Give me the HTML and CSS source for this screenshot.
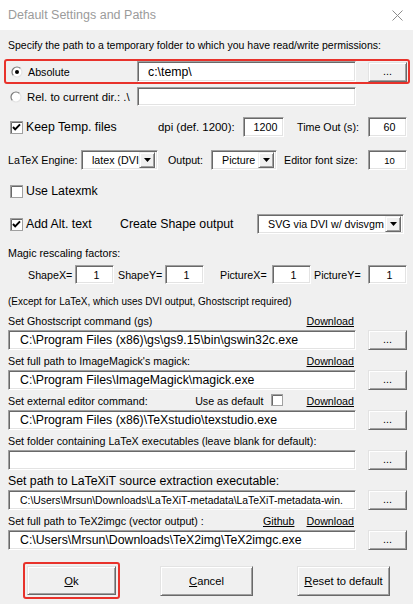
FILE: index.html
```html
<!DOCTYPE html>
<html lang="en">
<head>
<meta charset="utf-8">
<title>Default Settings and Paths</title>
<link rel="stylesheet" href="styles.css">
</head>
<body>
<div class="titlebar">
  <span class="title">Default Settings and Paths</span>
  <svg class="close" width="11" height="11" viewBox="0 0 11 11"><path d="M0.5 0.5 L10.5 10.5 M10.5 0.5 L0.5 10.5" stroke="#8c8c8c" stroke-width="1"/></svg>
</div>
<main class="panel">
  <p class="row r-spec">Specify the path to a temporary folder to which you have read/write permissions:</p>

  <div class="row r-abs highlight">
    <span class="opt w-abs">
      <svg class="radio" width="12" height="12" viewBox="0 0 12 12"><circle cx="6" cy="6" r="5" fill="#fff"/><path d="M9.54 2.46 A5 5 0 0 0 2.46 9.54" fill="none" stroke="#7a7a7a" stroke-width="1.2"/><path d="M9.54 2.46 A5 5 0 0 1 2.46 9.54" fill="none" stroke="#e3e3e3" stroke-width="1.2"/><circle cx="6" cy="6" r="2" fill="#000"/></svg>
      <span class="sm">Absolute</span>
    </span>
    <span class="field f-temp lg">c:\temp\</span>
    <span class="btn dots">...</span>
  </div>

  <div class="row r-rel">
    <span class="opt w-rel">
      <svg class="radio" width="12" height="12" viewBox="0 0 12 12"><circle cx="6" cy="6" r="5" fill="#fff"/><path d="M9.54 2.46 A5 5 0 0 0 2.46 9.54" fill="none" stroke="#7a7a7a" stroke-width="1.2"/><path d="M9.54 2.46 A5 5 0 0 1 2.46 9.54" fill="none" stroke="#e3e3e3" stroke-width="1.2"/></svg>
      <span class="md">Rel. to current dir.: .\</span>
    </span>
    <span class="field f-rel"></span>
  </div>

  <div class="row r-keep">
    <span class="opt w-keep">
      <svg class="check" width="13" height="13" viewBox="0 0 13 13"><rect x="0.5" y="0.5" width="12" height="12" fill="#fff" stroke="#a0a0a0"/><path d="M1.5 12 V1.5 H12" fill="none" stroke="#696969"/><polyline points="3,6 5.2,8.4 10,3.4" fill="none" stroke="#000" stroke-width="2"/></svg>
      <span class="lg">Keep Temp. files</span>
    </span>
    <span class="lbl w-dpi md">dpi (def. 1200):</span>
    <span class="field num w-1200 sm">1200</span>
    <span class="lbl w-time sm">Time Out (s):</span>
    <span class="field num w-end sm">60</span>
  </div>

  <div class="row r-engine">
    <span class="lbl w-engine sm">LaTeX Engine:</span>
    <span class="combo w-c1 sm"><span class="ctext">latex (DVI</span><span class="drop"><svg width="7" height="4" viewBox="0 0 7 4"><polygon points="0,0 7,0 3.5,4" fill="#000"/></svg></span></span>
    <span class="lbl w-output sm">Output:</span>
    <span class="combo w-c2 sm"><span class="ctext">Picture</span><span class="drop"><svg width="7" height="4" viewBox="0 0 7 4"><polygon points="0,0 7,0 3.5,4" fill="#000"/></svg></span></span>
    <span class="lbl w-font sm">Editor font size:</span>
    <span class="field num w-end tiny">10</span>
  </div>

  <div class="row r-latexmk">
    <span class="opt">
      <svg class="check" width="13" height="13" viewBox="0 0 13 13"><rect x="0.5" y="0.5" width="12" height="12" fill="#fff" stroke="#a0a0a0"/><path d="M1.5 12 V1.5 H12" fill="none" stroke="#696969"/></svg>
      <span class="lg">Use Latexmk</span>
    </span>
  </div>

  <div class="row r-alt">
    <span class="opt w-alt">
      <svg class="check" width="13" height="13" viewBox="0 0 13 13"><rect x="0.5" y="0.5" width="12" height="12" fill="#fff" stroke="#a0a0a0"/><path d="M1.5 12 V1.5 H12" fill="none" stroke="#696969"/><polyline points="3,6 5.2,8.4 10,3.4" fill="none" stroke="#000" stroke-width="2"/></svg>
      <span class="lg">Add Alt. text</span>
    </span>
    <span class="lbl w-shape lg">Create Shape output</span>
    <span class="combo w-c3 sm"><span class="ctext">SVG via DVI w/ dvisvgm</span><span class="drop"><svg width="7" height="4" viewBox="0 0 7 4"><polygon points="0,0 7,0 3.5,4" fill="#000"/></svg></span></span>
  </div>

  <p class="row r-magic sm">Magic rescaling factors:</p>

  <div class="row r-scale sm">
    <span class="lbl w-sx">ShapeX=</span>
    <span class="field num w-39">1</span>
    <span class="lbl w-sy">ShapeY=</span>
    <span class="field num w-39">1</span>
    <span class="lbl w-px">PictureX=</span>
    <span class="field num w-39">1</span>
    <span class="lbl w-py">PictureY=</span>
    <span class="field num w-39">1</span>
  </div>

  <p class="row r-except">(Except for LaTeX, which uses DVI output, Ghostscript required)</p>

  <div class="row r-label sm"><span class="ltext">Set Ghostscript command (gs)</span><a class="link">Download</a></div>
  <div class="row r-box"><span class="field f-path lg">C:\Program Files (x86)\gs\gs9.15\bin\gswin32c.exe</span><span class="btn dots">...</span></div>

  <div class="row r-label sm"><span class="ltext">Set full path to ImageMagick's magick:</span><a class="link">Download</a></div>
  <div class="row r-box"><span class="field f-path lg">C:\Program Files\ImageMagick\magick.exe</span><span class="btn dots">...</span></div>

  <div class="row r-label sm"><span class="ltext">Set external editor command:</span><span class="useas">Use as default</span><svg class="check small" width="12" height="12" viewBox="0 0 12 12"><rect x="0.5" y="0.5" width="11" height="11" fill="#fff" stroke="#a0a0a0"/><path d="M1.5 11 V1.5 H11" fill="none" stroke="#696969"/></svg><a class="link">Download</a></div>
  <div class="row r-box"><span class="field f-path lg">C:\Program Files (x86)\TeXstudio\texstudio.exe</span><span class="btn dots">...</span></div>

  <div class="row r-label sm"><span class="ltext">Set folder containing LaTeX executables (leave blank for default):</span></div>
  <div class="row r-box"><span class="field f-path lg"></span><span class="btn dots">...</span></div>

  <div class="row r-label lg"><span class="ltext">Set path to LaTeXiT source extraction executable:</span></div>
  <div class="row r-box"><span class="field f-path f-latexit">C:\Users\Mrsun\Downloads\LaTeXiT-metadata\LaTeXiT-metadata-win.</span><span class="btn dots">...</span></div>

  <div class="row r-label sm"><span class="ltext">Set full path to TeX2imgc (vector output) :</span><a class="link">Github</a><a class="link l-dl">Download</a></div>
  <div class="row r-box"><span class="field f-path lg">C:\Users\Mrsun\Downloads\TeX2img\TeX2imgc.exe</span><span class="btn dots">...</span></div>

  <div class="row r-actions">
    <span class="focus-ring"><span class="btn action a-ok"><u>O</u>k</span></span>
    <span class="btn action a-cancel"><u>C</u>ancel</span>
    <span class="btn action a-reset"><u>R</u>eset to default</span>
  </div>
</main>
</body>
</html>
```

FILE: styles.css
```css
* { box-sizing: border-box; }

html, body {
  margin: 0;
  padding: 0;
}

body {
  width: 413px;
  height: 604px;
  overflow: hidden;
  background: #f0f0f0;
  color: #000;
  font-family: "Liberation Sans", Arial, sans-serif;
  font-size: 10.7px;
}

.sm { font-size: 10.7px; }
.md { font-size: 11.4px; }
.lg { font-size: 12.3px; }
.tiny { font-size: 9.5px; }

/* title bar */
.titlebar {
  height: 30px;
  background: #fff;
  display: flex;
  align-items: center;
  justify-content: space-between;
  padding: 0 10px 0 8px;
}
.title {
  font-size: 12.5px;
  color: #9b9b9b;
}

/* generic row */
.panel { display: block; }
.row {
  display: flex;
  align-items: center;
  margin: 0;
  white-space: nowrap;
}

.r-spec { height: 18px; margin-top: 6px; padding-left: 8px; font-size: 10.5px; }

.highlight {
  height: 25px;
  margin-top: 5px;
  margin-left: 4px;
  width: 406px;
  border: 2px solid #e8322b;
  border-radius: 3px;
  padding-left: 5px;
}
.r-rel { height: 19px; margin-top: 3px; padding-left: 10px; }
.r-keep { height: 20px; margin-top: 11px; padding-left: 10px; }
.r-engine { height: 20px; margin-top: 13px; padding-left: 8px; }
.r-latexmk { height: 20px; margin-top: 11px; padding-left: 10px; }
.r-alt { height: 20px; margin-top: 13px; padding-left: 10px; }
.r-magic { height: 18px; margin-top: 10px; padding-left: 8px; }
.r-scale { height: 19px; margin-top: 3px; padding-left: 28px; }
.r-except { height: 18px; margin-top: 8px; padding-left: 8px; font-size: 10px; }
.r-label { height: 20px; padding: 2px 59px 0 8px; }
.r-box { height: 20px; padding-left: 8px; }
.r-actions { height: 37px; margin-top: 12px; padding-left: 23px; }

/* option (radio/checkbox + text) */
.opt { display: flex; align-items: center; gap: 3px; }
.radio { margin-right: 2px; flex: none; }
.check { flex: none; }
.w-abs { width: 126px; }
.w-rel { width: 127px; }
.w-keep { width: 148px; }
.w-alt { width: 110px; }

.lbl { display: block; flex: none; }
.w-dpi { width: 85px; }
.w-time { width: 71px; margin-left: 13px; }
.w-engine { width: 73px; }
.w-output { width: 43px; margin-left: 10px; }
.w-font { width: 84px; margin-left: 7px; }
.w-shape { width: 137px; }
.w-sx { width: 47px; }
.w-sy { width: 47px; margin-left: 4px; }
.w-px { width: 52px; margin-left: 16px; }
.w-py { width: 54px; margin-left: 3px; }

/* sunken fields */
.field, .combo {
  display: flex;
  align-items: center;
  flex: none;
  background: #fff;
  border: 1px solid;
  border-color: #a0a0a0 #fff #fff #a0a0a0;
  box-shadow: inset 1px 1px #696969, inset -1px -1px #e3e3e3;
  overflow: hidden;
  white-space: nowrap;
}
.field { height: 100%; }
.f-temp { width: 219px; padding-left: 10px; }
.f-rel { width: 219px; }
.f-path { width: 348px; padding-left: 11px; }
.f-latexit { font-size: 10.4px; padding-left: 11px; }
.num { justify-content: center; padding-left: 4px; }
.w-1200 { width: 41px; }
.w-end { width: 39px; }
.w-39 { width: 39px; }

.combo {
  height: 20px;
  padding: 2px 2px 2px 10px;
  justify-content: space-between;
}
.w-c1 { width: 77px; }
.w-c2 { width: 66px; }
.w-c3 { width: 147px; }
.ctext { overflow: hidden; flex: 1; }
.drop {
  flex: none;
  width: 16px;
  height: 16px;
  display: flex;
  align-items: center;
  justify-content: center;
  background: #f0f0f0;
  border: 1px solid;
  border-color: #f0f0f0 #696969 #696969 #f0f0f0;
  box-shadow: inset 1px 1px #fff, inset -1px -1px #a0a0a0;
}

/* raised buttons */
.btn {
  display: flex;
  align-items: center;
  justify-content: center;
  flex: none;
  background: #f0f0f0;
  border: 1px solid;
  border-color: #e3e3e3 #696969 #696969 #e3e3e3;
  box-shadow: inset 1px 1px #fff, inset -1px -1px #a0a0a0;
}
.dots {
  width: 39px;
  height: 20px;
  margin-left: 12px;
  font-size: 10.7px;
  padding-bottom: 2px;
}

/* label rows */
.ltext { flex: 1; }
.link { text-decoration: underline; color: #000; }
.l-dl { margin-left: 12px; }
.useas { margin-right: 8px; }
.check.small { margin-right: 23px; margin-top: -2px; }

/* action buttons */
.action { width: 93px; height: 30px; font-size: 11.2px; }
.focus-ring {
  display: flex;
  border: 2px solid #e8322b;
  border-radius: 3px;
  padding: 2px;
}
.a-ok { width: 89px; height: 29px; }
.a-cancel { margin-left: 40px; }
.a-reset { margin-left: 44px; }
```
